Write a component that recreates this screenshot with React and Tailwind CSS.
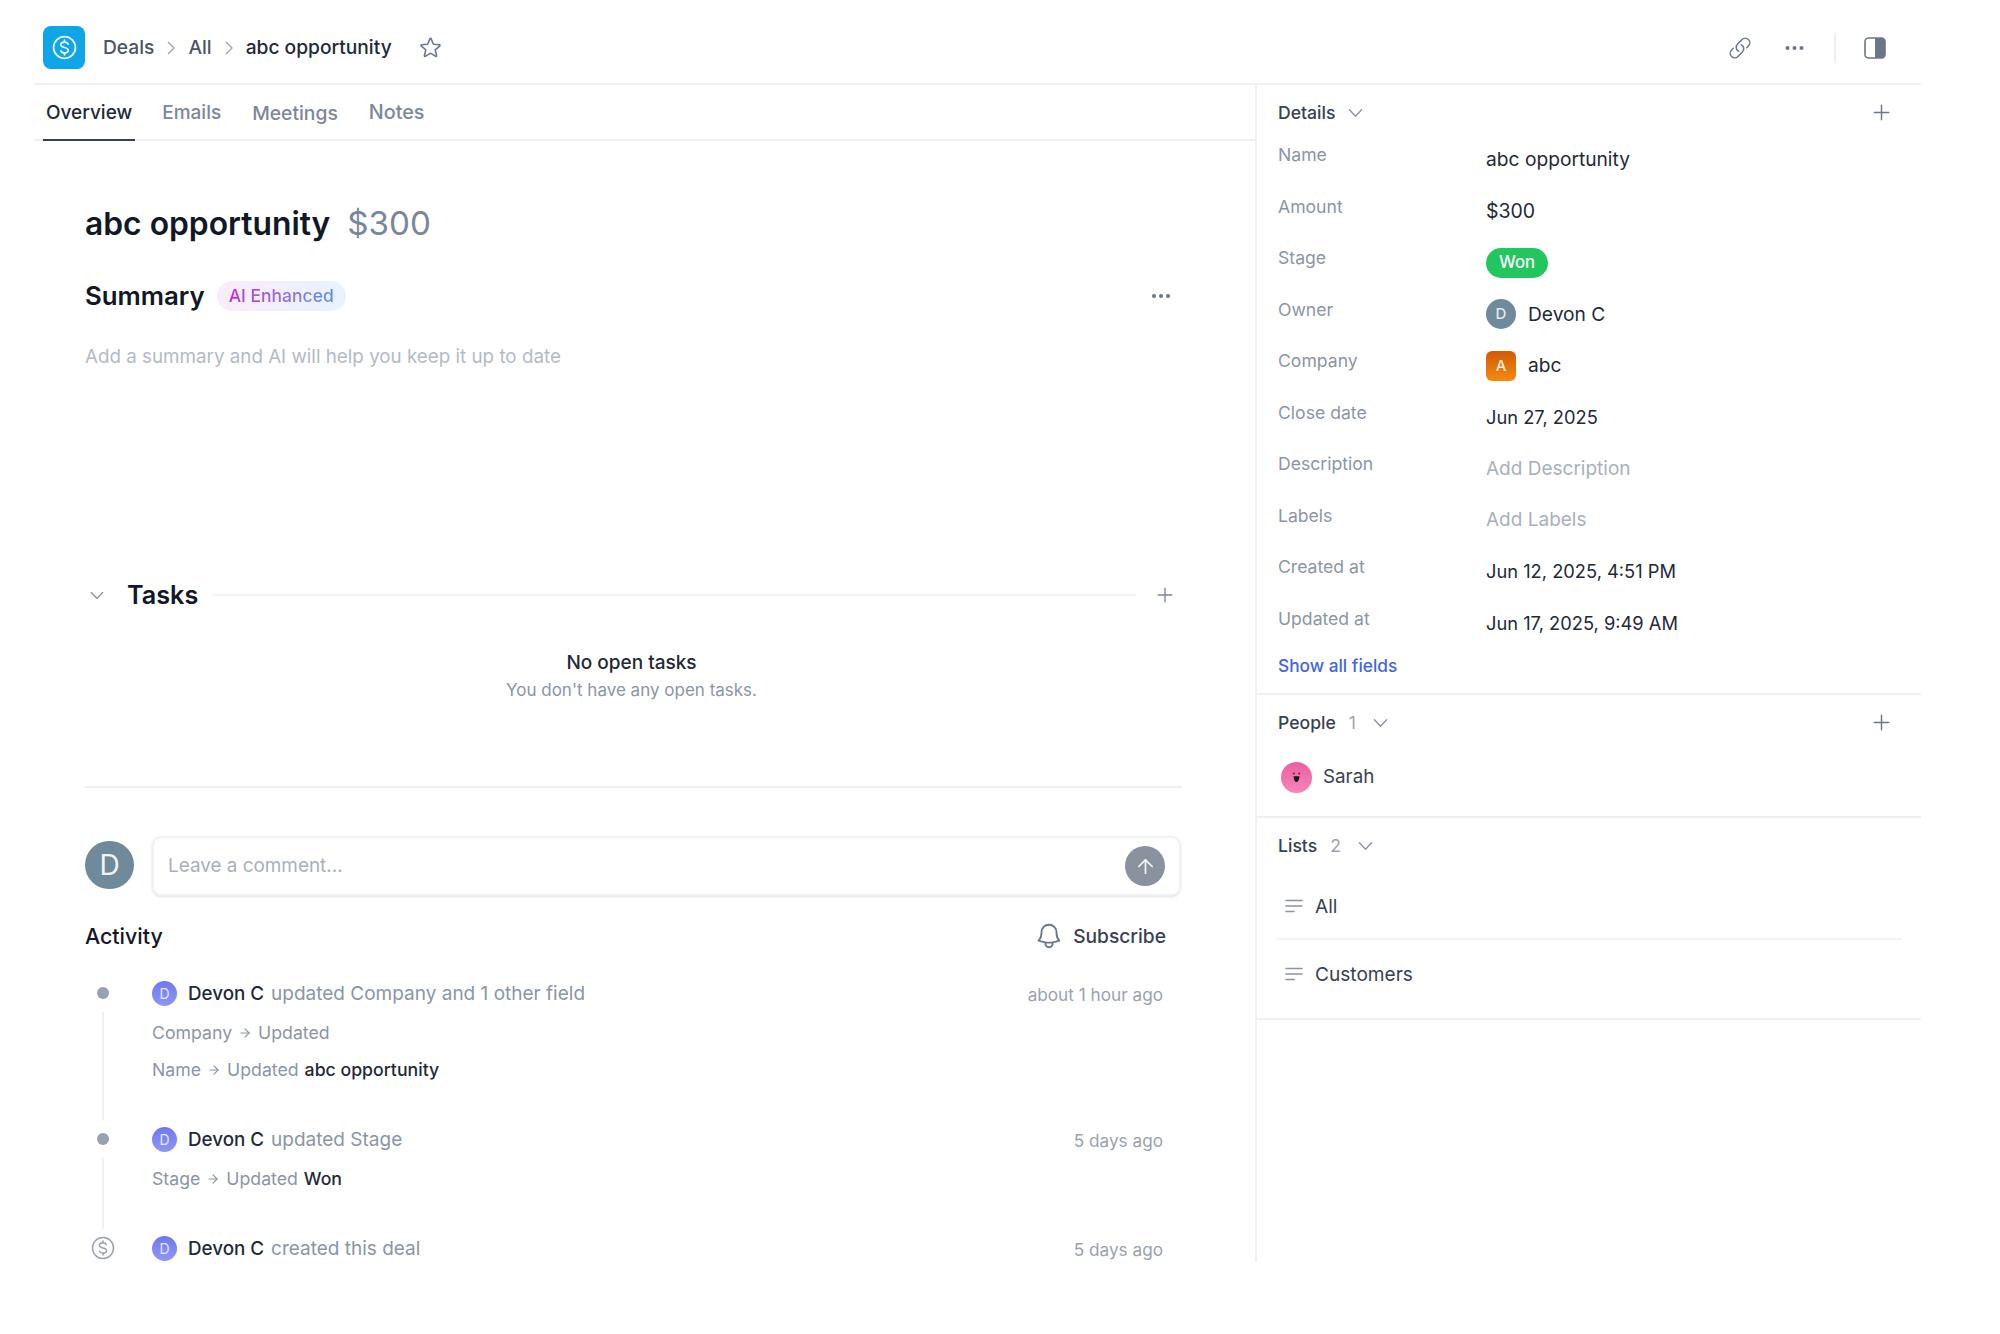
import React from "react";
import { HiOutlineStar, HiOutlineLink, HiOutlineBell, HiOutlinePlus } from "react-icons/hi2";
import { ArrowUp, ArrowRight } from "lucide-react";

const Chevron = ({ className = "" }) => (
  <svg viewBox="0 0 16 10" className={className} fill="none" stroke="currentColor" strokeWidth="1.5" strokeLinecap="round" strokeLinejoin="round">
    <path d="M1.5 1.5 8 8.5l6.5-7" />
  </svg>
);

const DollarCircle = ({ className = "", strokeWidth = 1.6 }) => (
  <svg viewBox="0 0 24 24" className={className} fill="none" stroke="currentColor" strokeWidth={strokeWidth} strokeLinecap="round" strokeLinejoin="round">
    <circle cx="12" cy="12" r="10.5" />
    <path d="M15.5 8.8c-.5-1.2-1.9-2-3.5-2-2 0-3.6 1.1-3.6 2.6 0 3.4 7.2 1.8 7.2 5.2 0 1.5-1.6 2.6-3.6 2.6-1.6 0-3-.8-3.5-2" />
    <path d="M12 5v1.8M12 17.2V19" />
  </svg>
);

const ListIcon = () => (
  <svg viewBox="0 0 18 14" className="w-[18px] h-[14px] text-[#8b94a3]" fill="none" stroke="currentColor" strokeWidth="1.6" strokeLinecap="round">
    <path d="M1 1.5h16M1 7h16M1 12.5h8" />
  </svg>
);

const Dots = ({ className = "" }) => (
  <svg viewBox="0 0 20 6" className={className} fill="currentColor">
    <circle cx="3" cy="3" r="2" /><circle cx="10" cy="3" r="2" /><circle cx="17" cy="3" r="2" />
  </svg>
);

const Divider = () => <div className="h-[2px] bg-[#eef0f4]" />;

const rows = [
  ["Name", <span className="text-[19.2px]">abc opportunity</span>],
  ["Amount", <span className="text-[19.5px]">$300</span>],
  ["Stage", <span className="inline-flex items-center justify-center w-[62px] h-[30px] rounded-full bg-[#22c55e] text-white font-medium text-[16.8px]">Won</span>],
  ["Owner", <span className="flex items-center gap-[12px] text-[19.2px]"><span className="w-[30px] h-[30px] rounded-full bg-[#6f8a9a] text-white/80 text-[15px] font-medium flex items-center justify-center">D</span>Devon C</span>],
  ["Company", <span className="flex items-center gap-[12px] text-[19.2px]"><span className="w-[30px] h-[30px] rounded-[6px] bg-gradient-to-b from-[#d15a06] to-[#f58a10] text-white/90 text-[15px] font-medium flex items-center justify-center">A</span>abc</span>],
  ["Close date", <span className="text-[18.3px]">Jun 27, 2025</span>],
  ["Description", <span className="text-[19px] text-[#a9b0bc]">Add Description</span>],
  ["Labels", <span className="text-[19px] text-[#a9b0bc]">Add Labels</span>],
  ["Created at", <span className="text-[18.3px]">Jun 12, 2025, 4:51 PM</span>],
  ["Updated at", <span className="text-[18.3px]">Jun 17, 2025, 9:49 AM</span>],
];

function Row({ label, children }) {
  return (
    <div className="flex items-center h-[51.5px]">
      <div className="w-[208px] mb-[9px] text-[17.6px] text-[#8b95a5]">{label}</div>
      <div className="text-[#1f2937]">{children}</div>
    </div>
  );
}

function SectionHead({ title, count, gap = "ml-[13px]" }) {
  return (
    <div className="flex items-center">
      <span className="text-[17.6px] font-medium text-[#374151]">{title}</span>
      {count && <span className="ml-[13px] text-[17.6px] text-[#9ca3af]">{count}</span>}
      <Chevron className={`${gap} w-[15px] h-[10px] text-[#8b94a3]`} />
    </div>
  );
}

function Arrow({ className = "" }) {
  return <ArrowRight size={14} strokeWidth={2} className={`text-[#8b95a5] ${className}`} />;
}

function ActivityHead({ action, time }) {
  return (
    <div className="flex items-center h-[26px] pr-[19px]">
      <span className="w-[25px] h-[25px] rounded-full bg-gradient-to-b from-[#6f78ee] to-[#8d97f6] text-white/80 text-[14px] flex items-center justify-center">D</span>
      <span className="ml-[11px] pt-[2px] text-[18.8px] font-medium text-[#1f2937]">Devon C</span>
      <span className="ml-[7px] pt-[2px] text-[19px] text-[#8b95a5]">{action}</span>
      <span className="ml-auto mt-[3px] text-[17.2px] text-[#9aa2b0]">{time}</span>
    </div>
  );
}

function Gutter({ icon, line }) {
  return (
    <div className="w-[36px] flex flex-col items-center shrink-0">
      <div className="h-[26px] flex items-center justify-center">{icon}</div>
      {line && <div className="w-[2px] flex-1 mt-[6px] mb-[6px] bg-[#f0f1f4]" />}
    </div>
  );
}

const Dot = () => <span className="w-[12px] h-[12px] rounded-full bg-[#98a1b0]" />;

export default function App() {
  return (
    <div className="w-[2000px] h-[1334px] bg-white pl-[34px] font-['Inter',sans-serif] overflow-hidden">
      <div className="w-[1887px]">
        {/* Top bar */}
        <header className="h-[85px] border-b-2 border-[#eef0f4] flex items-center pl-[9px] pt-[12px]">
          <div className="w-[42px] h-[43px] rounded-[8px] bg-[#0ea5e9] flex items-center justify-center">
            <DollarCircle className="w-[25px] h-[25px] text-white/90" strokeWidth={1.7} />
          </div>
          <span className="ml-[18px] text-[19.2px] font-medium text-[#4b5563]">Deals</span>
          <svg viewBox="0 0 8 14" className="mx-[13px] w-[8px] h-[14px] text-[#9ca3af]" fill="none" stroke="currentColor" strokeWidth="1.3"><path d="M1 1l6 6-6 6" /></svg>
          <span className="text-[19.2px] font-medium text-[#4b5563]">All</span>
          <svg viewBox="0 0 8 14" className="mx-[13px] w-[8px] h-[14px] text-[#9ca3af]" fill="none" stroke="currentColor" strokeWidth="1.3"><path d="M1 1l6 6-6 6" /></svg>
          <span className="text-[19.2px] font-medium text-[#1f2937]">abc opportunity</span>
          <HiOutlineStar className="ml-[26px] w-[25px] h-[25px] text-[#6b7688]" />
          <HiOutlineLink className="ml-auto w-[24px] h-[24px] text-[#6b7688]" />
          <Dots className="ml-[32px] w-[21px] h-[6px] text-[#6b7688]" />
          <div className="ml-[29px] w-[2px] h-[30px] bg-[#eef0f4]" />
          <svg viewBox="0 0 22 22" className="ml-[28px] mr-[35px] w-[22px] h-[22px] text-[#6b7688]" fill="none">
            <rect x="1" y="1" width="20" height="20" rx="3.5" stroke="currentColor" strokeWidth="1.6" />
            <path d="M11 1h6.5A3.5 3.5 0 0 1 21 4.5v13a3.5 3.5 0 0 1-3.5 3.5H11z" fill="currentColor" />
          </svg>
        </header>

        <div className="flex h-[1177px]">
          {/* Main column */}
          <main className="w-[1221px] shrink-0 overflow-hidden">
            <nav className="h-[56px] border-b-2 border-[#eef0f4] flex pl-[9px] gap-[24px]">
              <button className="h-[56px] px-[3px] pt-[2px] border-b-2 border-[#374151] text-[19px] font-medium text-[#1f2937]">Overview</button>
              <button className="h-[56px] px-[3px] pt-[2px] border-b-2 border-transparent text-[19px] font-medium text-[#7d8796]">Emails</button>
              <button className="h-[56px] ml-[1px] px-[3px] pt-[2px] border-b-2 border-transparent text-[19.3px] font-medium text-[#7d8796]">Meetings</button>
              <button className="h-[56px] ml-[1px] px-[3px] pt-[2px] border-b-2 border-transparent text-[19.8px] font-medium text-[#7d8796]">Notes</button>
            </nav>

            <div className="pl-[51px] w-[1148px]">
              <div className="pt-[63px] flex items-center h-[103px] gap-[17px]">
                <h1 className="text-[31.8px] font-semibold text-[#111827]">abc opportunity</h1>
                <span className="text-[33.2px] text-[#7a8699]">$300</span>
              </div>

              <div className="mt-[34px] h-[36px] flex items-center pr-[11px]">
                <h2 className="text-[25.8px] font-semibold text-[#111827]">Summary</h2>
                <span className="ml-[12px] h-[30px] px-[12px] rounded-full bg-gradient-to-r from-[#faecfb] to-[#e8f2fd] flex items-center text-[17.5px] font-medium">
                  <span className="bg-gradient-to-r from-[#c026d3] to-[#4f8fe8] bg-clip-text text-transparent">AI Enhanced</span>
                </span>
                <Dots className="ml-auto w-[20px] h-[6px] text-[#6b7688]" />
              </div>

              <p className="mt-[31px] h-[24px] leading-[24px] text-[18.8px] text-[#b4bac5]">Add a summary and AI will help you keep it up to date</p>

              <div className="mt-[210px] h-[32px] flex items-center pl-[5px] pr-[6px]">
                <Chevron className="w-[14px] h-[9px] text-[#8b94a3]" />
                <h2 className="ml-[23px] pt-[2px] text-[25.2px] font-semibold text-[#111827]">Tasks</h2>
                <div className="ml-[14px] flex-1 h-[2px] bg-[#f3f4f6]" />
                <HiOutlinePlus className="ml-[18px] w-[22px] h-[22px] text-[#7d8796]" />
              </div>

              <div className="mt-[39px] h-[26px] leading-[26px] text-center text-[19px] font-medium text-[#1f2937] pr-[4px]">No open tasks</div>
              <div className="mt-[1px] h-[26px] leading-[26px] text-center text-[17px] text-[#8b95a5] pr-[4px]">You don't have any open tasks.</div>
              <div className="mt-[83px]"><Divider /></div>

              <div className="mt-[48px] flex items-center gap-[18px]">
                <div className="w-[49px] h-[48px] mb-[2px] shrink-0 rounded-full bg-[#6f8a9a] text-white/90 text-[28px] flex items-center justify-center">D</div>
                <div className="flex-1 h-[60px] mr-[1px] rounded-[9px] border-2 border-[#f0f1f3] shadow-sm flex items-center pl-[14px] pr-[14px]">
                  <span className="text-[18.9px] text-[#a9b0bc]">Leave a comment...</span>
                  <span className="ml-auto w-[40px] h-[40px] rounded-full bg-[#8a92a0] flex items-center justify-center">
                    <ArrowUp size={23} strokeWidth={1.8} className="text-white/90" />
                  </span>
                </div>
              </div>

              <div className="mt-[26px] h-[28px] flex items-center pr-[16px]">
                <h3 className="text-[21.4px] font-medium text-[#111827]">Activity</h3>
                <HiOutlineBell className="ml-auto w-[30px] h-[30px] text-[#6b7688]" />
                <span className="ml-[9px] text-[19.2px] font-medium text-[#374151]">Subscribe</span>
              </div>

              <div className="mt-[30px] flex h-[146px]">
                <Gutter icon={<Dot />} line />
                <div className="ml-[31px] flex-1">
                  <ActivityHead action="updated Company and 1 other field" time="about 1 hour ago" />
                  <div className="mt-[15px] h-[24px] flex items-center text-[17.7px] text-[#8b95a5]">
                    Company<Arrow className="mx-[6px]" />Updated
                  </div>
                  <div className="mt-[13px] h-[24px] flex items-center text-[17.7px] text-[#8b95a5]">
                    Name<Arrow className="mx-[6px]" />Updated<span className="ml-[6px] font-medium text-[#1f2937]">abc opportunity</span>
                  </div>
                </div>
              </div>

              <div className="flex h-[109px]">
                <Gutter icon={<Dot />} line />
                <div className="ml-[31px] flex-1">
                  <ActivityHead action="updated Stage" time="5 days ago" />
                  <div className="mt-[15px] h-[24px] flex items-center text-[17.7px] text-[#8b95a5]">
                    Stage<Arrow className="mx-[6px]" />Updated<span className="ml-[6px] font-medium text-[#1f2937]">Won</span>
                  </div>
                </div>
              </div>

              <div className="flex">
                <Gutter icon={<DollarCircle className="w-[24px] h-[24px] text-[#9aa2b0]" strokeWidth={1.5} />} />
                <div className="ml-[31px] flex-1">
                  <ActivityHead action="created this deal" time="5 days ago" />
                </div>
              </div>
            </div>
          </main>

          {/* Right panel */}
          <aside className="w-[666px] border-l-2 border-[#eef0f4]">
            <section className="pl-[21px] pr-[28px] pb-[10px]">
              <div className="pt-[14px] pb-[7px]">
                <div className="h-[28px] flex items-center justify-between">
                  <SectionHead title="Details" />
                  <HiOutlinePlus className="-mt-[2px] w-[23px] h-[23px] text-[#6b7688]" />
                </div>
              </div>
              {rows.map(([l, v]) => <Row key={l} label={l}>{v}</Row>)}
              <div className="h-[34px] flex items-center text-[17.3px] font-medium text-[#3f66e6]">Show all fields</div>
            </section>
            <Divider />

            <section className="pl-[21px] pr-[28px] pb-[12px]">
              <div className="h-[56px] flex items-center justify-between">
                <SectionHead title="People" count="1" gap="ml-[17px]" />
                <HiOutlinePlus className="-mt-[2px] w-[23px] h-[23px] text-[#6b7688]" />
              </div>
              <div className="h-[53px] flex items-center pl-[3px] gap-[11px] text-[18.8px] text-[#374151]">
                <svg viewBox="0 0 31 31" className="w-[31px] h-[31px]">
                  <defs>
                    <linearGradient id="sarah" x1="0" y1="0" x2="0" y2="1">
                      <stop offset="0" stopColor="#ec5fa0" />
                      <stop offset="1" stopColor="#f884ba" />
                    </linearGradient>
                  </defs>
                  <circle cx="15.5" cy="15.5" r="15.5" fill="url(#sarah)" />
                  <circle cx="12.8" cy="11.5" r="1" fill="#5b2340" />
                  <circle cx="18.2" cy="11.5" r="1" fill="#5b2340" />
                  <path d="M12.6 14.2h5.8c0 3-1.2 5.8-2.9 5.8s-2.9-2.8-2.9-5.8z" fill="#1c1216" />
                </svg>
                Sarah
              </div>
            </section>
            <Divider />

            <section className="pb-[10px]">
              <div className="h-[57px] pl-[21px] flex items-center">
                <SectionHead title="Lists" count="2" gap="ml-[17px]" />
              </div>
              <div className="ml-[19px] mr-[19px] h-[65px] pb-[1px] border-b-2 border-[#f3f4f6] flex items-center gap-[12px] pl-[9px] text-[19.1px] text-[#374151]">
                <ListIcon />All
              </div>
              <div className="ml-[19px] mr-[19px] h-[68px] flex items-center gap-[12px] pl-[9px] text-[19.1px] text-[#374151]">
                <ListIcon />Customers
              </div>
            </section>
            <Divider />
          </aside>
        </div>
      </div>
    </div>
  );
}
